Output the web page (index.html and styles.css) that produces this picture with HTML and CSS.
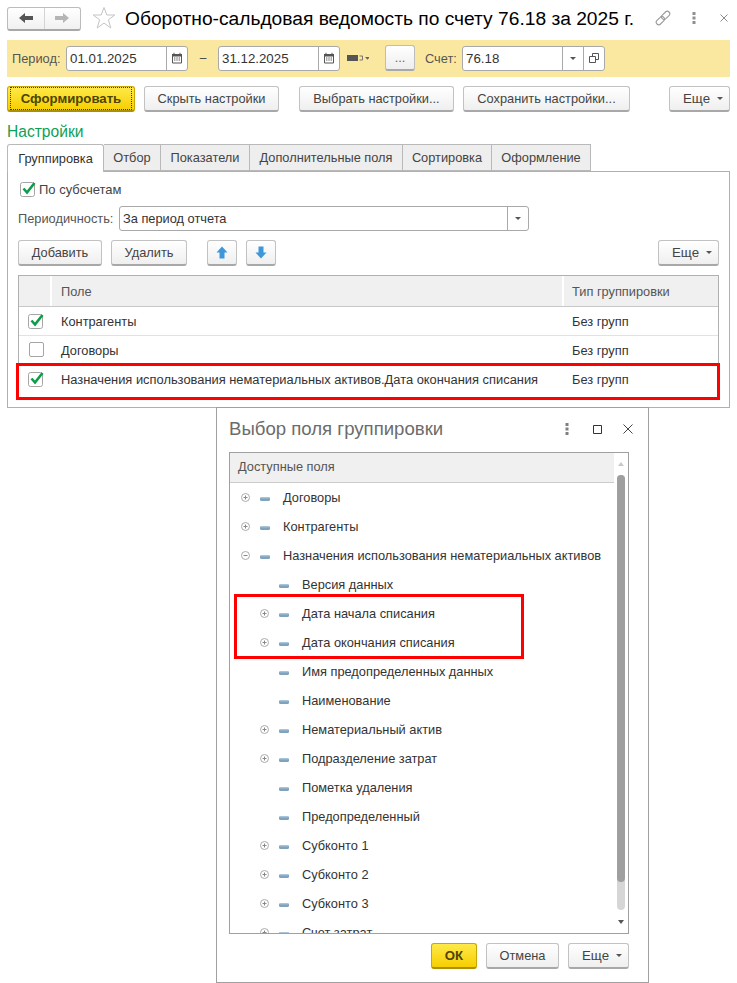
FILE: index.html
```html
<!DOCTYPE html>
<html lang="ru">
<head>
<meta charset="utf-8">
<title>Оборотно-сальдовая ведомость</title>
<link rel="stylesheet" href="styles.css">
</head>
<body>
<svg class="defs" width="0" height="0" aria-hidden="true">
  <symbol id="cal" viewBox="0 0 12 12"><path d="M1.5 2.5h9v8.5h-9z" fill="none" stroke="#555"/><path d="M1 2h10v2.5H1z" fill="#555"/><path d="M3 .8v2M9 .8v2" stroke="#555"/><path d="M3 6h1.4M5.3 6h1.4M7.6 6h1.4M3 8h1.4M5.3 8h1.4M7.6 8h1.4" stroke="#555"/></symbol>
  <symbol id="chk" viewBox="0 0 16 16"><rect x=".5" y="1.500" width="14" height="14" rx="2" fill="#fff" stroke="#a5a5a5"/><path d="M3.500 7.500 7 11.500 14.500 2" fill="none" stroke="#0f9d4a" stroke-width="2.600"/></symbol>
  <symbol id="plus" viewBox="0 0 9 9"><circle cx="4.500" cy="4.500" r="4" fill="#fff" stroke="#aaa"/><path d="M2.500 4.500h4M4.500 2.500v4" stroke="#888"/></symbol>
  <symbol id="minus" viewBox="0 0 9 9"><circle cx="4.500" cy="4.500" r="4" fill="#fff" stroke="#aaa"/><path d="M2.500 4.500h4" stroke="#888"/></symbol>
  <symbol id="dash" viewBox="0 0 10 4"><rect x="0" y="0" width="10" height="4" rx="1.500" fill="#7fa3bd"/><rect x="1" y="0" width="8" height="1.400" fill="#a9c4d6"/></symbol>
</svg>
<div class="page">
  <header class="head">
    <div class="nav">
      <span class="nav-b"><svg width="16" height="12" viewBox="0 0 16 12"><path d="M1 6 7 1v3h8v4H7v3z" fill="#555"/></svg></span>
      <span class="nav-b"><svg width="16" height="12" viewBox="0 0 16 12"><path d="M15 6 9 1v3H1v4h8v3z" fill="#b5b5b5"/></svg></span>
    </div>
    <svg class="star" width="24" height="24" viewBox="0 0 24 24"><path d="M12 1.500 14.800 9H22.800L16.400 13.800 18.800 22 12 17 5.200 22 7.600 13.800 1.200 9H9.200z" fill="#fff" stroke="#c4c4c4"/></svg>
    <h1 class="title">Оборотно-сальдовая ведомость по счету 76.18 за 2025 г.</h1>
    <svg class="link-i" width="16" height="16" viewBox="0 0 16 16"><g fill="none" stroke="#9a9a9a" stroke-width="1.100" transform="rotate(-45 8 8)"><rect x="-.5" y="5.500" width="9.500" height="5" rx="2.500"/><rect x="7" y="5.500" width="9.500" height="5" rx="2.500"/></g></svg>
    <svg class="more-i" width="4" height="12" viewBox="0 0 4 12"><path d="M.5 0h3v3h-3zM.5 4.500h3v3h-3zM.5 9h3v3h-3z" fill="#8f8f8f"/></svg>
    <svg class="close-i" width="8" height="8" viewBox="0 0 8 8"><path d="M.5.500l7 7M7.500.500l-7 7" stroke="#8a8a8a"/></svg>
  </header>

  <section class="filter">
    <span class="lbl">Период:</span>
    <div class="field w-date"><span class="val">01.01.2025</span><span class="fbtn btn-date"><svg width="12" height="12"><use href="#cal"/></svg></span></div>
    <span class="dash-sep">–</span>
    <div class="field w-date"><span class="val">31.12.2025</span><span class="fbtn btn-date"><svg width="12" height="12"><use href="#cal"/></svg></span></div>
    <span class="period-i"><svg width="22" height="8" viewBox="0 0 22 8"><path d="M0 1h11v6H0z" fill="#555"/><path d="M12.500 2h3v4h-3" fill="none" stroke="#777"/><path d="M18 3h5l-2.500 2.800z" fill="#666"/></svg></span>
    <span class="dots-b">...</span>
    <span class="lbl lbl-acc">Счет:</span>
    <div class="field w-acc"><span class="val">76.18</span><span class="fbtn btn-drop"><i class="tri"></i></span><span class="fbtn btn-open"><svg width="10" height="10" viewBox="0 0 10 10"><path d="M3.500.500h6v6h-6z" fill="none" stroke="#555"/><path d="M.5 3.500h6v6h-6z" fill="#fff" stroke="#555"/></svg></span></div>
  </section>

  <div class="cmd">
    <button class="btn primary w-form"><span class="focus">Сформировать</span></button>
    <button class="btn w-hide">Скрыть настройки</button>
    <button class="btn w-sel">Выбрать настройки...</button>
    <button class="btn w-save">Сохранить настройки...</button>
    <button class="btn w-more push">Еще<i class="tri tri-b"></i></button>
  </div>

  <div class="set-h">Настройки</div>
  <nav class="tabs">
    <span class="tab active t1">Группировка</span>
    <span class="tab t2">Отбор</span>
    <span class="tab t3">Показатели</span>
    <span class="tab t4">Дополнительные поля</span>
    <span class="tab t5">Сортировка</span>
    <span class="tab t6">Оформление</span>
  </nav>
  <section class="panel">
    <label class="sub"><svg width="16" height="16"><use href="#chk"/></svg><span>По субсчетам</span></label>
    <div class="per">
      <span class="per-l">Периодичность:</span>
      <div class="field w-per"><span class="val">За период отчета</span><span class="fbtn btn-drop"><i class="tri"></i></span></div>
    </div>
    <div class="bar">
      <button class="btn w-add">Добавить</button>
      <button class="btn w-del">Удалить</button>
      <button class="btn w-arrow first"><svg width="12" height="13" viewBox="0 0 12 13"><path d="M6 .5 11.500 6.500H8.500V12.500H3.500V6.500H.5z" fill="#3d97d8"/></svg></button>
      <button class="btn w-arrow"><svg width="12" height="13" viewBox="0 0 12 13"><path d="M6 12.500 11.500 6.500H8.500V.5H3.500V6.500H.5z" fill="#3d97d8"/></svg></button>
      <button class="btn w-more push">Еще<i class="tri tri-b"></i></button>
    </div>
    <div class="table">
      <div class="tr th"><span class="c-chk"></span><span class="c-name">Поле</span><span class="c-type">Тип группировки</span></div>
      <div class="tr"><span class="c-chk"><svg width="16" height="16"><use href="#chk"/></svg></span><span class="c-name">Контрагенты</span><span class="c-type">Без групп</span></div>
      <div class="tr"><span class="c-chk"><span class="box"></span></span><span class="c-name">Договоры</span><span class="c-type">Без групп</span></div>
      <div class="tr last"><span class="c-chk"><svg width="16" height="16"><use href="#chk"/></svg></span><span class="c-name long">Назначения использования нематериальных активов.Дата окончания списания</span><span class="c-type">Без групп</span></div>
      <div class="mark mark-row"></div>
    </div>
  </section>

  <section class="dialog">
    <div class="dlg-h">
      <h2 class="dlg-t">Выбор поля группировки</h2>
      <svg class="d-more" width="4" height="12" viewBox="0 0 4 12"><path d="M.5 0h3v3h-3zM.5 4.500h3v3h-3zM.5 9h3v3h-3z" fill="#808080"/></svg>
      <svg class="d-max" width="9" height="9" viewBox="0 0 9 9"><path d="M.5.500h8v8h-8z" fill="none" stroke="#333"/></svg>
      <svg class="d-close" width="10" height="10" viewBox="0 0 10 10"><path d="M.5.500l9 9M9.500.500l-9 9" stroke="#444"/></svg>
    </div>
    <div class="tree-box">
      <div class="tree-main">
        <div class="tree-h">Доступные поля</div>
        <ul class="tree">
          <li><svg class="ex" width="9" height="9"><use href="#plus"/></svg><svg class="it" width="10" height="4"><use href="#dash"/></svg><span>Договоры</span></li>
          <li><svg class="ex" width="9" height="9"><use href="#plus"/></svg><svg class="it" width="10" height="4"><use href="#dash"/></svg><span>Контрагенты</span></li>
          <li><svg class="ex" width="9" height="9"><use href="#minus"/></svg><svg class="it" width="10" height="4"><use href="#dash"/></svg><span>Назначения использования нематериальных активов</span></li>
          <li class="lv2"><i class="ex"></i><svg class="it" width="10" height="4"><use href="#dash"/></svg><span>Версия данных</span></li>
          <li class="lv2"><svg class="ex" width="9" height="9"><use href="#plus"/></svg><svg class="it" width="10" height="4"><use href="#dash"/></svg><span>Дата начала списания</span></li>
          <li class="lv2"><svg class="ex" width="9" height="9"><use href="#plus"/></svg><svg class="it" width="10" height="4"><use href="#dash"/></svg><span>Дата окончания списания</span></li>
          <li class="lv2"><i class="ex"></i><svg class="it" width="10" height="4"><use href="#dash"/></svg><span>Имя предопределенных данных</span></li>
          <li class="lv2"><i class="ex"></i><svg class="it" width="10" height="4"><use href="#dash"/></svg><span>Наименование</span></li>
          <li class="lv2"><svg class="ex" width="9" height="9"><use href="#plus"/></svg><svg class="it" width="10" height="4"><use href="#dash"/></svg><span>Нематериальный актив</span></li>
          <li class="lv2"><svg class="ex" width="9" height="9"><use href="#plus"/></svg><svg class="it" width="10" height="4"><use href="#dash"/></svg><span>Подразделение затрат</span></li>
          <li class="lv2"><i class="ex"></i><svg class="it" width="10" height="4"><use href="#dash"/></svg><span>Пометка удаления</span></li>
          <li class="lv2"><i class="ex"></i><svg class="it" width="10" height="4"><use href="#dash"/></svg><span>Предопределенный</span></li>
          <li class="lv2"><svg class="ex" width="9" height="9"><use href="#plus"/></svg><svg class="it" width="10" height="4"><use href="#dash"/></svg><span>Субконто 1</span></li>
          <li class="lv2"><svg class="ex" width="9" height="9"><use href="#plus"/></svg><svg class="it" width="10" height="4"><use href="#dash"/></svg><span>Субконто 2</span></li>
          <li class="lv2"><svg class="ex" width="9" height="9"><use href="#plus"/></svg><svg class="it" width="10" height="4"><use href="#dash"/></svg><span>Субконто 3</span></li>
          <li class="lv2"><svg class="ex" width="9" height="9"><use href="#plus"/></svg><svg class="it" width="10" height="4"><use href="#dash"/></svg><span>Счет затрат</span></li>
        </ul>
      </div>
      <div class="sb">
        <i class="sb-up"></i>
        <div class="sb-track"><div class="sb-thumb"></div></div>
        <i class="sb-down"></i>
      </div>
      <div class="mark mark-tree"></div>
    </div>
    <div class="dlg-f">
      <button class="btn primary w-ok">ОК</button>
      <button class="btn w-cancel">Отмена</button>
      <button class="btn w-more">Еще<i class="tri tri-b"></i></button>
    </div>
  </section>
</div>
</body>
</html>
```
FILE: styles.css
```css
* { box-sizing: border-box; }
html, body { margin: 0; padding: 0; background: #fff; }
body { font-family: "Liberation Sans", Arial, sans-serif; font-size: 12.800px; color: #333; }
.defs { position: absolute; }
.page { width: 737px; height: 983px; overflow: hidden; display: flex; flex-direction: column; padding: 0 0 0 7px; }

.head { height: 40px; width: 723px; display: flex; align-items: center; flex: none; }
.nav { display: flex; width: 74px; height: 24px; margin-top: -3px; border: 1px solid #bcbcbc; border-bottom: 2px solid #a8a8a8; border-radius: 3px; background: linear-gradient(#fff, #f1f1f1); }
.nav-b { flex: 1; display: flex; align-items: center; justify-content: center; }
.nav-b + .nav-b { border-left: 1px solid #d4d4d4; }
.star { margin: -4px 0 0 11px; }
.title { margin: -3px 0 0 9px; font-size: 19.200px; font-weight: 400; color: #000; white-space: nowrap; width: 522px; }
.link-i { margin: -5px 0 0 8px; }
.more-i { margin: -4px 0 0 21px; }
.close-i { margin: -5px 0 0 24px; }

.filter { width: 723px; height: 37px; flex: none; background: #fbe8a0; display: flex; align-items: center; padding: 0 0 1px 5px; color: #555; }
.lbl { font-size: 12.800px; width: 54px; color: #555; }
.field { height: 25px; border: 1px solid #a9a9a9; border-radius: 3px; background: #fff; display: flex; color: #333; flex: none; }
.val { flex: 1; font-size: 12.800px; line-height: 23px; padding-left: 3px; white-space: nowrap; }
.w-date .val, .w-acc .val { font-size: 13.300px; }
.fbtn { display: flex; align-items: center; justify-content: center; border-left: 1px solid #a9a9a9; flex: none; }
.w-date { width: 122px; }
.btn-date { width: 21px; }
.dash-sep { width: 30px; text-align: center; font-size: 12px; color: #444; }
.period-i { width: 45px; padding-left: 7px; display: flex; }
.dots-b { width: 30px; height: 26px; margin-top: -1px; border: 1px solid #bdbdbd; border-bottom: 2px solid #a8a8a8; border-radius: 3px; background: linear-gradient(#fff, #eee); text-align: center; line-height: 24px; color: #666; }
.lbl-acc { width: 37px; margin-left: 10px; }
.w-acc { width: 143px; }
.btn-drop { width: 21px; }
.btn-open { width: 21px; }
.tri { display: block; width: 0; height: 0; border-left: 3px solid transparent; border-right: 3px solid transparent; border-top: 3.500px solid #555; }
.tri-b { margin-left: 7px; }

.cmd { display: flex; width: 723px; margin-top: 9px; flex: none; height: 26px; }
.btn { height: 26px; padding: 0; font: 12.800px "Liberation Sans", Arial, sans-serif; color: #444; border: 1px solid #c2c2c2; border-bottom: 2px solid #a8a8a8; border-radius: 3px; background: linear-gradient(#fff, #efefef); display: flex; align-items: center; justify-content: center; flex: none; }
.primary { background: linear-gradient(#ffe94a, #f7cf00); border-color: #c8a800; border-bottom-color: #ab9000; font-weight: 700; font-size: 13.200px; color: #4d4400; }
.focus { border: 1px dotted #2a2a9a; padding: 3px 0; width: 122px; text-align: center; }
.w-form { width: 128px; }
.w-hide { width: 135px; margin-left: 9px; }
.w-sel { width: 155px; margin-left: 20px; }
.w-save { width: 167px; margin-left: 9px; }
.w-more { width: 61px; font-size: 13.300px; justify-content: flex-start; padding-left: 13px; }
.push { margin-left: auto; }

.set-h { margin-top: 10px; padding-top: 1px; font-size: 15.600px; line-height: 18px; color: #0e9f58; flex: none; height: 22px; }
.tabs { display: flex; height: 28px; flex: none; width: 723px; position: relative; z-index: 1; }
.tab { height: 27px; border: 1px solid #b9b9b9; border-left: 0; background: #eee; display: flex; align-items: center; justify-content: center; color: #444; font-size: 12.800px; flex: none; }
.tab.active { height: 28px; padding-bottom: 1px; background: #fff; border-left: 1px solid #b9b9b9; border-bottom: 0; border-radius: 3px 3px 0 0; color: #333; }
.t1 { width: 97px; } .t2 { width: 57px; } .t3 { width: 89px; } .t4 { width: 153px; } .t5 { width: 89px; } .t6 { width: 99px; }

.panel { width: 723px; height: 237px; flex: none; border: 1px solid #b0b0b0; margin-top: -1px; padding: 0 10px; }
.sub { display: flex; align-items: center; height: 18px; margin-top: 8px; gap: 3px; margin-left: 2px; color: #444; font-size: 13px; }
.per { display: flex; align-items: center; margin-top: 8px; height: 25px; }
.per-l { width: 101px; color: #555; }
.w-per { width: 410px; }
.bar { display: flex; margin-top: 9px; height: 26px; }
.w-add { width: 84px; }
.w-del { width: 76px; margin-left: 9px; }
.w-arrow { width: 30px; margin-left: 9px; }
.w-arrow.first { margin-left: 20px; }

.table { position: relative; margin-top: 9px; border: 1px solid #b0b0b0; border-bottom: 0; width: 701px; }
.tr { display: flex; height: 29px; padding-top: 1px; align-items: center; border-bottom: 1px solid #e2e2e2; color: #333; }
.tr.last { border-bottom: 0; height: 29px; padding-top: 0; }
.th { height: 31px; padding-top: 0; background: #f0f0f0; border-bottom: 1px solid #c8c8c8; color: #555; }
.th .c-chk, .th .c-name { border-right: 2px solid #fff; height: 100%; }
.c-chk { width: 33px; display: flex; justify-content: center; flex: none; padding-left: 1px; margin-top: -2px; }
.th .c-chk { margin-top: 0; }
.c-name { width: 512px; flex: none; padding-left: 9px; white-space: nowrap; display: flex; align-items: center; }
.c-name.long { font-size: 12.880px; }
.c-type { padding-left: 8px; }
.box { width: 15px; height: 15px; border: 1px solid #a5a5a5; border-radius: 2px; background: #fff; display: block; }
.mark { position: absolute; border: 3px solid #f00; pointer-events: none; }
.mark-row { left: -3px; top: 87px; width: 704px; height: 37px; }

.dialog { width: 433px; height: 576px; margin-left: 209px; margin-top: -1px; flex: none; border: 1px solid #a0a0a0; padding: 0 19px 0 12px; background: #fff; position: relative; z-index: 2; }
.dlg-h { height: 44px; display: flex; align-items: center; padding: 0 0 2px 0; }
.dlg-h svg { flex: none; }
.dlg-t { margin: 0; flex: none; font-size: 18.600px; font-weight: 400; color: #6c6c6c; width: 336px; }
.d-max { margin-left: 24px; }
.d-close { margin-left: 21px; }
.tree-box { position: relative; width: 400px; height: 482px; border: 1px solid #a0a0a0; display: flex; overflow: hidden; }
.tree-main { flex: 1; min-width: 0; }
.tree-h { height: 30px; line-height: 28px; background: #f0f0f0; border-bottom: 1px solid #ccc; padding-left: 8px; color: #555; }
.tree { list-style: none; margin: 0; padding: 0; }
.tree li { height: 29px; display: flex; align-items: center; padding-left: 11px; color: #333; white-space: nowrap; }
.tree li.lv2 { padding-left: 30px; }
.ex { width: 9px; height: 9px; flex: none; display: block; }
.it { margin: 2px 0 0 10px; flex: none; }
.tree span { margin-left: 13px; }
.sb { width: 14px; flex: none; display: flex; flex-direction: column; align-items: center; }
.sb-up, .sb-down { display: block; width: 0; height: 0; border-left: 3px solid transparent; border-right: 3px solid transparent; }
.sb-up { border-bottom: 4px solid #c8c8c8; margin-top: 9px; }
.sb-down { border-top: 4px solid #555; margin: 10px 0 9px; }
.sb-track { width: 8px; flex: 1; background: #d6d6d6; border-radius: 4px; margin-top: 9px; }
.sb-thumb { width: 8px; height: 407px; background: #9f9f9f; border-radius: 4px; }
.mark-tree { left: 4px; top: 141px; width: 290px; height: 65px; }
.dlg-f { display: flex; justify-content: flex-end; margin-top: 9px; gap: 9px; }
.w-ok { width: 46px; }
.w-cancel { width: 73px; }
```
